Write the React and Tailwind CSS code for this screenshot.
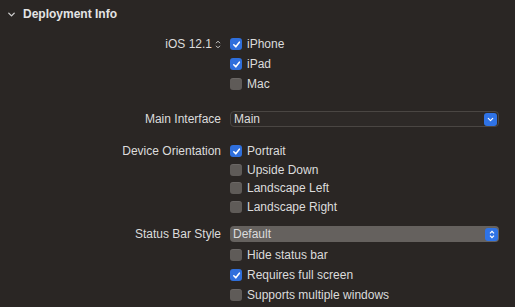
import { ChevronDown } from 'lucide-react'

const FONT = { fontFamily: '"Liberation Sans", Arial, sans-serif' }

function Check({ checked }) {
  return checked ? (
    <span className="flex h-[12px] w-[12px] shrink-0 items-center justify-center rounded-[3px] bg-[#2f6fdc]">
      <svg width="9" height="9" viewBox="0 0 10 10" fill="none">
        <path d="M2 5.3 L4.2 7.6 L8.2 2.4" stroke="#fff" strokeWidth="1.7" strokeLinecap="round" strokeLinejoin="round" />
      </svg>
    </span>
  ) : (
    <span className="block h-[12px] w-[12px] shrink-0 rounded-[3px] bg-[#5f5b58] shadow-[inset_0_1px_0_rgba(255,255,255,0.08)]" />
  )
}

function CheckRow({ label, checked, h = 'h-[20px]' }) {
  return (
    <div className={`flex ${h} items-center gap-[5px]`}>
      <Check checked={checked} />
      <span className="text-[12px] text-[#dcdcdc]">{label}</span>
    </div>
  )
}

function Label({ children, h = 'h-[20px]' }) {
  return <div className={`flex ${h} items-center justify-end text-[12px] text-[#dcdcdc]`}>{children}</div>
}

function UpDown() {
  return (
    <svg width="6" height="9" viewBox="0 0 6 9" fill="none" className="ml-[3px]">
      <path d="M1 3.2 L3 1.2 L5 3.2 M1 5.8 L3 7.8 L5 5.8" stroke="#cfcfcf" strokeWidth="1" />
    </svg>
  )
}

function UpDownWhite() {
  return (
    <svg width="6" height="9" viewBox="0 0 6 9" fill="none">
      <path d="M1 3.4 L3 1.4 L5 3.4 M1 5.6 L3 7.6 L5 5.6" stroke="#fff" strokeWidth="1.3" />
    </svg>
  )
}

function Select({ value, light }) {
  return (
    <div
      className={`flex h-[16px] items-center justify-between rounded-[4px] pl-[3px] pr-[1px] text-[12px] text-[#dcdcdc] ${
        light ? 'bg-[#65615e]' : 'border border-[#4a4643] bg-[#2d2927]'
      }`}
    >
      <span>{value}</span>
      <span className="flex h-[13px] w-[13px] items-center justify-center rounded-[3px] bg-[#2f73e6]">
        {light ? <UpDownWhite /> : <ChevronDown size={9} strokeWidth={3} color="#fff" />}
      </span>
    </div>
  )
}

export default function App() {
  return (
    <div className="h-[307px] w-[515px] overflow-hidden bg-[#2a2624]" style={FONT}>
      <div className="flex h-[28px] items-center pl-[6px]">
        <ChevronDown size={11} strokeWidth={3} color="#cfcfcf" />
        <span className="ml-[6px] text-[12px] font-bold text-[#e4e4e4]">Deployment Info</span>
      </div>

      <div className="grid grid-cols-[221px_1fr] gap-x-[9px] pr-[16px]">
        <div className="pt-[6px]">
          <Label>
            iOS 12.1
            <UpDown />
          </Label>
        </div>
        <div className="pt-[6px]">
          <CheckRow label="iPhone" checked />
          <CheckRow label="iPad" checked />
          <CheckRow label="Mac" />
        </div>

        <div className="pt-[17px]">
          <Label h="h-[16px]">Main Interface</Label>
        </div>
        <div className="pt-[17px]">
          <Select value="Main" />
        </div>

        <div className="pt-[15px]">
          <Label h="h-[18px]">Device Orientation</Label>
        </div>
        <div className="pt-[15px]">
          <CheckRow label="Portrait" checked h="h-[18.5px]" />
          <CheckRow label="Upside Down" h="h-[18.5px]" />
          <CheckRow label="Landscape Left" h="h-[18.5px]" />
          <CheckRow label="Landscape Right" h="h-[18.5px]" />
        </div>

        <div className="pt-[10px]">
          <Label h="h-[16px]">Status Bar Style</Label>
        </div>
        <div className="pt-[10px]">
          <Select value="Default" light />
        </div>

        <div />
        <div className="pt-[3px]">
          <CheckRow label="Hide status bar" />
          <CheckRow label="Requires full screen" checked />
          <CheckRow label="Supports multiple windows" />
        </div>
      </div>
    </div>
  )
}
